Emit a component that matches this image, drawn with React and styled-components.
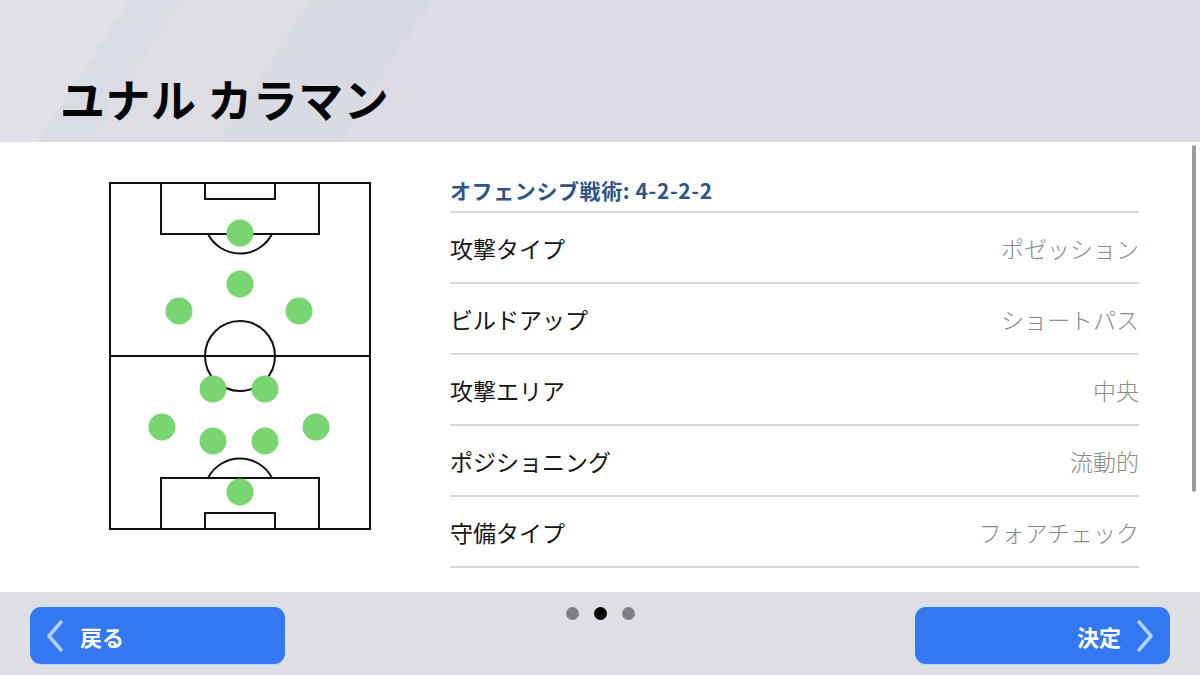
import React from 'react'
import styled, { createGlobalStyle } from 'styled-components'

const GlobalStyle = createGlobalStyle`
  html, body {
    margin: 0;
    padding: 0;
    width: 1200px;
    height: 675px;
    overflow: hidden;
    font-family: "Noto Sans CJK JP", "Noto Sans", sans-serif;
  }
`

export const Page = styled.div`
  width: 1200px;
  height: 675px;
  display: flex;
  flex-direction: column;
  background: #dcdde5;
`

export const Header = styled.div`
  height: 142px;
  box-sizing: border-box;
  padding: 66px 0 0 60px;
  background: linear-gradient(
    -57deg,
    #dcdce5 0%,
    #dcdce5 66.5%,
    #d9dbe2 66.5%,
    #d9dbe2 76%,
    #dddee4 76%,
    #dddee4 86%,
    #dadce3 86%,
    #dadce3 90%,
    #e1e2e7 90%
  );
`

export const Title = styled.h1`
  margin: 0;
  font-size: 45px;
  font-weight: 700;
  line-height: 66px;
  color: #050505;
  letter-spacing: 0.5px;
`

export const Content = styled.div`
  position: relative;
  height: 450px;
  background: #ffffff;
  display: flex;
  align-items: flex-start;
  padding-left: 108px;
`

export const FieldWrap = styled.div`
  padding-top: 39px;
  width: 264px;
  flex-shrink: 0;
`

export const List = styled.div`
  margin-left: 78px;
  padding-top: 28px;
  width: 689px;
  display: flex;
  flex-direction: column;
`

export const ListHead = styled.div`
  height: 43px;
  box-sizing: border-box;
  padding-bottom: 2px;
  display: flex;
  align-items: center;
  border-bottom: 2px solid #d9d9d9;
  font-size: 21px;
  font-weight: 700;
  color: #2f5585;
  letter-spacing: 0.6px;
`

export const Row = styled.div`
  height: 71px;
  box-sizing: border-box;
  border-bottom: 2px solid #d9d9d9;
  display: flex;
  align-items: center;
  justify-content: space-between;
  font-size: 23px;
`

export const Label = styled.span`
  color: #161616;
  font-weight: 400;
`

export const Value = styled.span`
  color: #8a8a8a;
  font-weight: 300;
`

export const Scrollbar = styled.div`
  position: absolute;
  right: 4px;
  top: 3px;
  width: 4px;
  height: 347px;
  border-radius: 2px;
  background: #9b9b9b;
`

export const Footer = styled.div`
  height: 83px;
  box-sizing: border-box;
  padding: 15px 30px 0;
  display: flex;
  justify-content: space-between;
  align-items: flex-start;
  background: #dddfe4;
`

export const Button = styled.button`
  width: 255px;
  height: 57px;
  border: none;
  border-radius: 11px;
  background: #3478f1;
  color: #ffffff;
  font-family: inherit;
  font-size: 22px;
  font-weight: 700;
  display: flex;
  align-items: center;
  justify-content: ${p => (p.$right ? 'flex-end' : 'flex-start')};
  gap: ${p => (p.$right ? '15px' : '16px')};
  padding: 0 ${p => (p.$right ? '16px' : '0')} 0 ${p => (p.$right ? '0' : '16px')};
  box-sizing: border-box;
  box-shadow: 0 1px 0 #b9d2f7;
`

export const Dots = styled.div`
  display: flex;
  gap: 15px;
`

export const Dot = styled.span`
  width: 13px;
  height: 13px;
  border-radius: 50%;
  background: ${p => (p.$active ? '#050505' : '#7f7f83')};
`

const players = [
  [240, 233], [240, 284], [179, 311], [299, 311],
  [213, 389], [265, 389], [162, 427], [316, 427],
  [213, 441], [265, 441], [240, 492],
]

const Pitch = () => (
  <svg width="264" height="350" viewBox="108 181 264 350" fill="none">
    <g stroke="#111" strokeWidth="2">
      <rect x="110" y="183" width="260" height="346" />
      <line x1="110" y1="356" x2="370" y2="356" />
      <circle cx="240" cy="356" r="35" />
      <rect x="161" y="183" width="158" height="51" />
      <rect x="205" y="183" width="70" height="16" />
      <path d="M208 234 A36 36 0 0 0 272 234" />
      <rect x="161" y="478" width="158" height="51" />
      <rect x="205" y="513" width="70" height="16" />
      <path d="M208 478 A36 36 0 0 1 272 478" />
    </g>
    {players.map(([x, y], i) => (
      <circle key={i} cx={x} cy={y} r="13.5" fill="#79d472" />
    ))}
  </svg>
)

const Chevron = ({ dir }) => (
  <svg width="18" height="34" viewBox="0 0 18 34" fill="none">
    <path
      d={dir === 'left' ? 'M15 3 L3 17 L15 31' : 'M3 3 L15 17 L3 31'}
      stroke="#b3d1fb"
      strokeWidth="3.5"
      strokeLinecap="round"
      strokeLinejoin="round"
    />
  </svg>
)

const rows = [
  ['攻撃タイプ', 'ポゼッション'],
  ['ビルドアップ', 'ショートパス'],
  ['攻撃エリア', '中央'],
  ['ポジショニング', '流動的'],
  ['守備タイプ', 'フォアチェック'],
]

export default function App() {
  return (
    <Page>
      <GlobalStyle />
      <Header>
        <Title>ユナル カラマン</Title>
      </Header>
      <Content>
        <FieldWrap>
          <Pitch />
        </FieldWrap>
        <List>
          <ListHead>オフェンシブ戦術: 4-2-2-2</ListHead>
          {rows.map(([l, v]) => (
            <Row key={l}>
              <Label>{l}</Label>
              <Value>{v}</Value>
            </Row>
          ))}
        </List>
        <Scrollbar />
      </Content>
      <Footer>
        <Button>
          <Chevron dir="left" />
          戻る
        </Button>
        <Dots>
          <Dot />
          <Dot $active />
          <Dot />
        </Dots>
        <Button $right>
          決定
          <Chevron dir="right" />
        </Button>
      </Footer>
    </Page>
  )
}
